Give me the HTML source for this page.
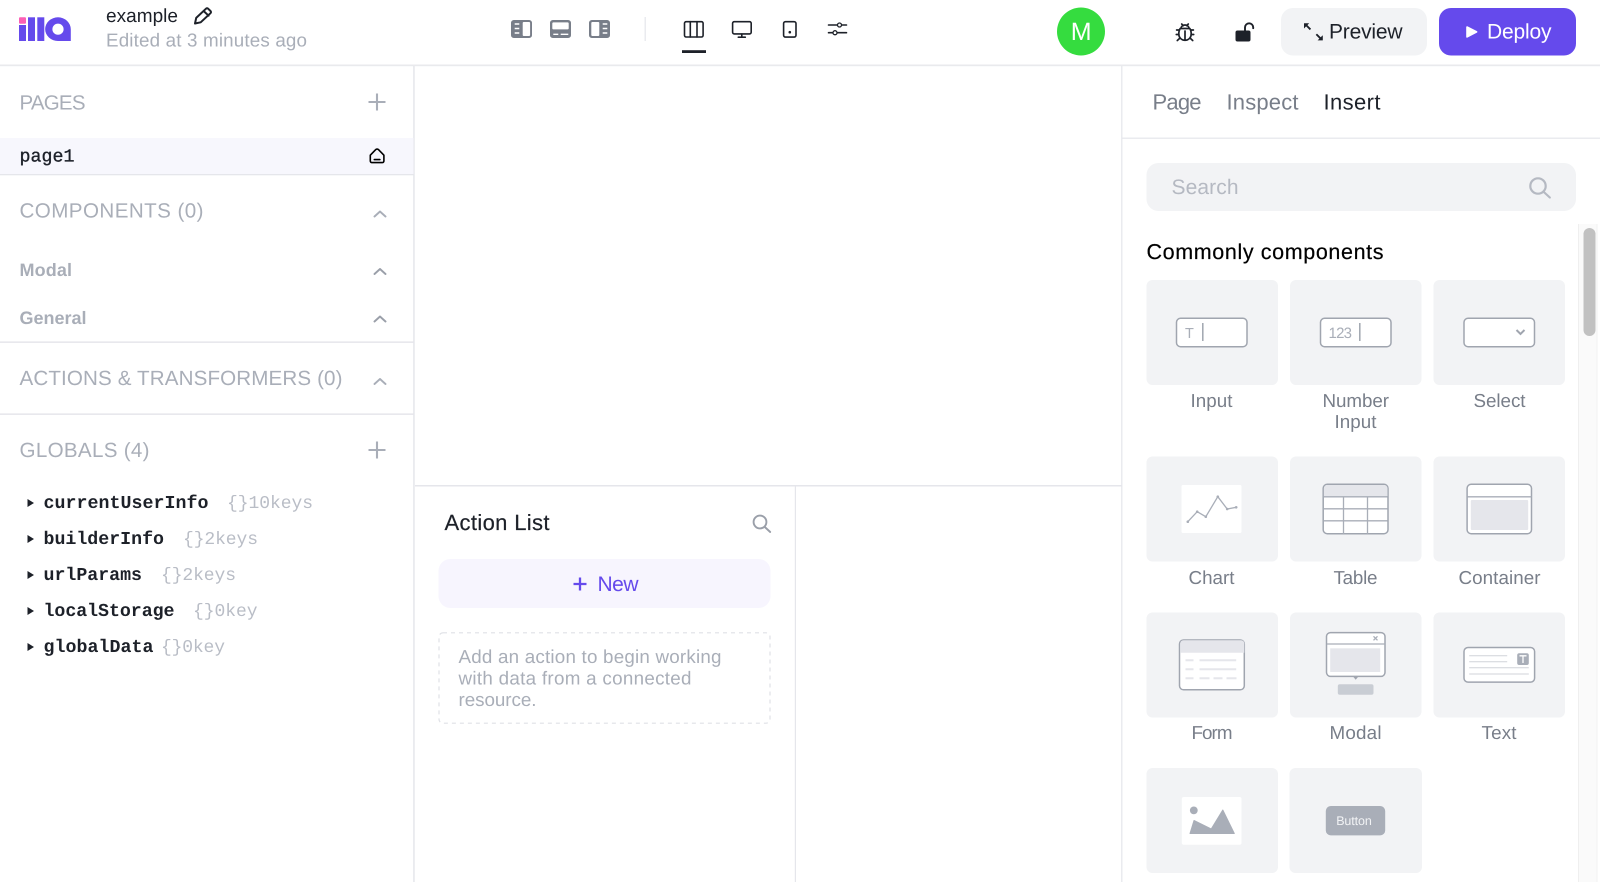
<!DOCTYPE html>
<html lang="en">
<head>
<meta charset="utf-8">
<title>example</title>
<style>
html,body{margin:0;padding:0;background:#fff;width:1600px;height:882px;overflow:hidden}
svg{display:block}
text{font-family:"Liberation Sans",sans-serif;text-rendering:geometricPrecision}
.m{font-family:"Liberation Mono","DejaVu Sans Mono",monospace}
.h{font-size:21px;fill:#a9aeb8}
.s{font-size:18.8px;fill:#a9aeb8}
.b{font-size:18.3px;font-weight:700;fill:#1d2129}
.v{font-size:18px;fill:#b9bdc6}
.l{font-size:18.8px;fill:#787e89}
.card{fill:#f2f3f5}
.o{fill:#fff;stroke:#a0a5af;stroke-width:1.5}
.n{fill:none;stroke:#a9aeb8;stroke-width:1.3}
.d{fill:none;stroke:#1d2129;stroke-width:1.6;stroke-linecap:round;stroke-linejoin:round}
.c{fill:none;stroke:#a9aeb8;stroke-width:1.9;stroke-linecap:round;stroke-linejoin:round}
.f{stroke:#e5e6eb;stroke-width:2;fill:none}
</style>
</head>
<body>
<svg width="1600" height="882" viewBox="0 0 1600 882" xmlns="http://www.w3.org/2000/svg">
<rect width="1600" height="882" fill="#fff"/>

<!-- Structure lines -->
<rect x="0" y="64.5" width="1600" height="1.7" fill="#e9eaed"/>
<rect x="413.2" y="66" width="1.5" height="816" fill="#e5e6eb"/>
<rect x="1121.2" y="66" width="1.2" height="816" fill="#e5e6eb"/>
<rect x="415" y="485" width="707" height="1.5" fill="#e5e6eb"/>
<rect x="794.8" y="486" width="1.2" height="396" fill="#e5e6eb"/>
<rect x="1122" y="137.6" width="478" height="1.2" fill="#e5e6eb"/>

<!-- Logo -->
<rect x="19" y="17.3" width="7" height="6.4" rx="1" fill="#fc5fb5"/>
<rect x="19" y="25" width="7" height="16" fill="#654aec"/>
<rect x="28" y="17.3" width="7" height="23.7" fill="#654aec"/>
<rect x="37.3" y="17.3" width="7" height="23.7" fill="#654aec"/>
<path fill-rule="evenodd" fill="#654aec" d="M58 17.3a12.8 12 0 0 1 12.8 12V41H58a12.8 11.8 0 0 1 0-23.7zM58 23.6a5.6 5.6 0 1 0 0 11.2 5.6 5.6 0 0 0 0-11.2z"/>

<!-- Title -->
<text x="106" y="22" font-size="19" fill="#1d2129" textLength="72" lengthAdjust="spacing">example</text>
<path fill="none" stroke="#1d2129" stroke-width="2" stroke-linejoin="round" stroke-linecap="round" d="M195 23.5l1.2-5.6 9.8-9.2a1.5 1.5 0 0 1 2.1 0l2.4 2.3a1.5 1.5 0 0 1 0 2.2l-9.8 9.1zM203.6 11l5 4.7"/>
<text x="106" y="46.3" class="s" textLength="201" lengthAdjust="spacing">Edited at 3 minutes ago</text>

<!-- Layout toggles -->
<rect x="511" y="20" width="21" height="18" rx="2.8" fill="#787e89"/>
<rect x="522.7" y="22" width="7.4" height="14" rx="1" fill="#fff"/>
<path d="M514.7 24h4.6M514.7 28.5h4.6M514.7 33h4.6" stroke="#fff" stroke-width="1.4"/>
<rect x="550" y="20" width="21" height="18" rx="2.8" fill="#787e89"/>
<rect x="552.3" y="22.4" width="16.4" height="7" rx="1" fill="#fff"/>
<path d="M553.3 34.3h5M560.7 34.3h7.6" stroke="#fff" stroke-width="1.4"/>
<rect x="589" y="20" width="21" height="18" rx="2.8" fill="#787e89"/>
<rect x="591.3" y="22" width="8" height="14" rx="1" fill="#fff"/>
<path d="M602.7 24h4.6M602.7 28.5h4.6M602.7 33h4.6" stroke="#fff" stroke-width="1.4"/>
<rect x="644.6" y="17" width="1.2" height="24" fill="#e5e6eb"/>

<!-- Viewport icons -->
<rect x="684.5" y="21.7" width="18.6" height="15.3" rx="1.6" class="d"/>
<path class="d" stroke-linecap="butt" d="M690.3 21.7V37M697 21.7V37"/>
<rect x="682" y="50.2" width="24" height="2.8" fill="#1d2129"/>
<rect x="732.6" y="21.7" width="18.6" height="12.2" rx="1.6" class="d"/>
<path class="d" d="M741.8 34v3M738.3 37.2h7"/>
<rect x="783.6" y="21.7" width="12.4" height="15.4" rx="1.8" class="d"/>
<circle cx="789.8" cy="32.2" r="1.3" fill="#1d2129"/>
<path class="d" stroke-width="1.3" d="M828.5 25h18M828.5 32.7h18"/>
<circle cx="839.5" cy="25" r="2" fill="#fff" stroke="#1d2129" stroke-width="1.3"/>
<circle cx="835" cy="32.7" r="2" fill="#fff" stroke="#1d2129" stroke-width="1.3"/>

<!-- Avatar -->
<circle cx="1081" cy="31.5" r="24" fill="#35dc3f"/>
<text x="1070.8" y="40" font-size="25" fill="#fff" textLength="21" lengthAdjust="spacing">M</text>

<!-- Bug -->
<path fill="none" stroke="#1d2129" stroke-width="1.7" stroke-linecap="round" stroke-linejoin="round" d="M1180.7 28.5a4.4 4.4 0 0 1 8.6 0zM1180.2 28.5h9.6c1 1.4 1.4 3.4 1.4 5.5 0 3.5-2.6 6.3-6.2 6.3s-6.2-2.8-6.2-6.3c0-2.1.4-4.1 1.4-5.5zM1185 31v9M1181.7 24l1.6 1.6M1188.3 24l-1.6 1.6M1176.6 30h3M1190.4 30h3M1176.3 34.5h2.7M1191 34.5h2.7M1177.3 40.5l2.6-2.4M1192.7 40.5l-2.6-2.4"/>
<!-- Lock -->
<rect x="1235.5" y="30.5" width="15" height="11" rx="2" fill="#1d2129"/>
<path d="M1245 31v-3.6a4.1 4.1 0 0 1 8.2 0v.8" fill="none" stroke="#1d2129" stroke-width="1.9" stroke-linecap="round"/>

<!-- Preview -->
<rect x="1281" y="8" width="146" height="47.5" rx="12" fill="#f2f3f5"/>
<path d="M1304 23.3h5.2l-1.8 1.8 3.7 3.7-1.3 1.3-3.7-3.7-2.1 2.1zM1322.8 40.4h-5.2l1.8-1.8-3.7-3.7 1.3-1.3 3.7 3.7 2.1-2.1z" fill="#1d2129"/>
<text x="1329" y="38.3" font-size="21" fill="#1d2129" textLength="73.5" lengthAdjust="spacing">Preview</text>

<!-- Deploy -->
<rect x="1439" y="8" width="137" height="47.5" rx="12" fill="#654aec"/>
<path d="M1467 27l9.6 4.9-9.6 5z" fill="#fff" stroke="#fff" stroke-width="1.6" stroke-linejoin="round"/>
<text x="1487" y="38.3" font-size="21" fill="#fff" textLength="64.5" lengthAdjust="spacing">Deploy</text>

<!-- Left panel -->
<g transform="translate(-.5 0)">
<text x="20" y="109.3" class="h" font-size="20.5" style="font-size:20.5px" textLength="66" lengthAdjust="spacing">PAGES</text>
<path d="M369 102h17M377.5 93.5v17" stroke="#a9aeb8" stroke-width="2.1" fill="none"/>
<rect x="0" y="138" width="414" height="36" fill="#f7f7fd"/>
<rect x="0" y="174" width="414" height="1.3" fill="#e5e6eb"/>
<text x="20" y="161.3" class="m" font-size="18.3" fill="#1d2129" stroke="#1d2129" stroke-width=".35" textLength="55" lengthAdjust="spacing">page1</text>
<path fill="none" stroke="#000" stroke-width="1.6" stroke-linecap="round" stroke-linejoin="round" d="M370.8 155.2l5.2-5.4a2.2 2.2 0 0 1 3.2 0l5.2 5.4v5.8a1.6 1.6 0 0 1-1.6 1.6h-10.4a1.6 1.6 0 0 1-1.6-1.6zM374.8 159.6h5.6"/>

<text x="20" y="217.3" class="h" style="font-size:20.6px" textLength="184" lengthAdjust="spacing">COMPONENTS (0)</text>
<path class="c" d="M375 216.5l5.5-5 5.5 5"/>
<text x="20" y="276" class="s" style="font-size:18px;font-weight:700" textLength="52.5" lengthAdjust="spacing">Modal</text>
<path class="c" stroke="#9a9fa9" style="stroke:#9a9fa9" d="M375 274l5.5-5 5.5 5"/>
<text x="20" y="324" class="s" style="font-size:18px;font-weight:700" textLength="67" lengthAdjust="spacing">General</text>
<path class="c" style="stroke:#9a9fa9" d="M375 321.5l5.5-5 5.5 5"/>
<rect x="0" y="341.4" width="414" height="1.5" fill="#e5e6eb"/>
<text x="20" y="385" class="h" style="font-size:20.6px" textLength="323" lengthAdjust="spacing">ACTIONS &amp; TRANSFORMERS (0)</text>
<path class="c" d="M375 384l5.5-5 5.5 5"/>
<rect x="0" y="413.4" width="414" height="1.5" fill="#e5e6eb"/>
<text x="20" y="457" class="h" style="font-size:20.6px" textLength="130" lengthAdjust="spacing">GLOBALS (4)</text>
<path d="M369 450h17M377.5 441.5v17" stroke="#a9aeb8" stroke-width="2.1" fill="none"/>

<path d="M28 499l6.5 4-6.5 4zM28 535l6.5 4-6.5 4zM28 571l6.5 4-6.5 4zM28 607l6.5 4-6.5 4zM28 643l6.5 4-6.5 4z" fill="#1d2129"/>
<text x="44" y="508" class="m b" textLength="165" lengthAdjust="spacing">currentUserInfo</text>
<text x="227.5" y="508" class="m v" textLength="86" lengthAdjust="spacing">{}10keys</text>
<text x="44" y="544" class="m b" textLength="120.5" lengthAdjust="spacing">builderInfo</text>
<text x="183.5" y="544" class="m v" textLength="75" lengthAdjust="spacing">{}2keys</text>
<text x="44" y="580" class="m b" textLength="98.5" lengthAdjust="spacing">urlParams</text>
<text x="161.5" y="580" class="m v" textLength="75" lengthAdjust="spacing">{}2keys</text>
<text x="44" y="616" class="m b" textLength="131" lengthAdjust="spacing">localStorage</text>
<text x="193.5" y="616" class="m v" textLength="64.5" lengthAdjust="spacing">{}0key</text>
<text x="44" y="652" class="m b" textLength="110" lengthAdjust="spacing">globalData</text>
<text x="161.5" y="652" class="m v" textLength="64" lengthAdjust="spacing">{}0key</text>
</g>

<!-- Action list -->
<g transform="translate(-.5 0)">
<text x="445" y="530" font-size="22" fill="#1d2129" stroke="#1d2129" stroke-width=".2" textLength="105" lengthAdjust="spacing">Action List</text>
<circle cx="760.5" cy="522" r="6.4" fill="none" stroke="#9a9fa9" stroke-width="1.9"/>
<path d="M765.3 527l5.4 5" stroke="#9a9fa9" stroke-width="1.9" stroke-linecap="round"/>
<rect x="439" y="559" width="332" height="49" rx="12" fill="#f7f5fe"/>
<path d="M574 584h13M580.5 577.5v13" stroke="#654aec" stroke-width="2.3"/>
<text x="598" y="591" font-size="21" fill="#654aec" textLength="41" lengthAdjust="spacing">New</text>
<rect x="439.5" y="632.8" width="331" height="90.4" rx="4" fill="none" stroke="#dfe1e6" stroke-width="1.2" stroke-dasharray="4 4"/>
<text x="459" y="663" class="s" textLength="263" lengthAdjust="spacing">Add an action to begin working</text>
<text x="459" y="684.5" class="s" textLength="233" lengthAdjust="spacing">with data from a connected</text>
<text x="459" y="706" class="s" textLength="78" lengthAdjust="spacing">resource.</text>
</g>

<g transform="translate(-.5 0)">
<!-- Right tabs -->
<text x="1153" y="109.3" font-size="22" fill="#787e89" textLength="49" lengthAdjust="spacing">Page</text>
<text x="1227" y="109.3" font-size="22" fill="#787e89" textLength="72" lengthAdjust="spacing">Inspect</text>
<text x="1324" y="109.3" font-size="22" fill="#1d2129" textLength="57" lengthAdjust="spacing">Insert</text>

<!-- Search -->
<rect x="1147" y="163" width="429.5" height="48" rx="12" fill="#f2f3f5"/>
<text x="1172" y="194" font-size="21" fill="#b5b9c2" textLength="67" lengthAdjust="spacing">Search</text>
<circle cx="1538.5" cy="186" r="7.7" fill="none" stroke="#b5b9c2" stroke-width="2.2"/>
<path d="M1544.3 192l6 5.5" stroke="#b5b9c2" stroke-width="2.2" stroke-linecap="round"/>

<text x="1147" y="259" font-size="21.5" fill="#000" stroke="#000" stroke-width=".2" textLength="237" lengthAdjust="spacing">Commonly components</text>

<!-- Cards -->
<rect class="card" x="1147" y="280" width="131.5" height="105" rx="6"/>
<rect class="card" x="1290.5" y="280" width="131.5" height="105" rx="6"/>
<rect class="card" x="1434" y="280" width="131.5" height="105" rx="6"/>
<rect class="card" x="1147" y="456.5" width="131.5" height="105" rx="6"/>
<rect class="card" x="1290.5" y="456.5" width="131.5" height="105" rx="6"/>
<rect class="card" x="1434" y="456.5" width="131.5" height="105" rx="6"/>
<rect class="card" x="1147" y="612.5" width="131.5" height="105" rx="6"/>
<rect class="card" x="1290.5" y="612.5" width="131.5" height="105" rx="6"/>
<rect class="card" x="1434" y="612.5" width="131.5" height="105" rx="6"/>
<rect class="card" x="1147" y="768" width="131.5" height="105" rx="6"/>
<rect class="card" x="1290" y="768" width="132.5" height="105" rx="6"/>

<!-- Input -->
<rect class="o" x="1177" y="318.3" width="70.5" height="28.4" rx="4"/>
<text x="1185.5" y="338" font-size="14.5" fill="#a9aeb8">T</text>
<path d="M1203.3 323v18" stroke="#a0a5af" stroke-width="1.5"/>
<!-- Number -->
<rect class="o" x="1321" y="318.3" width="70.5" height="28.4" rx="4"/>
<text x="1329" y="338" font-size="15" fill="#a9aeb8" textLength="23.5" lengthAdjust="spacing">123</text>
<path d="M1360.3 323v18" stroke="#a0a5af" stroke-width="1.5"/>
<!-- Select -->
<rect class="o" x="1464.5" y="318.3" width="70.5" height="28.4" rx="4"/>
<path d="M1517 330l4 4 4-4" fill="none" stroke="#a0a5af" stroke-width="2"/>
<!-- Chart -->
<rect x="1182" y="485" width="60" height="48" rx="1.5" fill="#fff"/>
<polyline class="n" points="1188.3,521.7 1197.7,511.7 1206.3,516.7 1218.3,496.7 1227.7,509 1236.7,507.3"/>
<g fill="#a9aeb8"><circle cx="1188.3" cy="521.7" r="1.3"/><circle cx="1197.7" cy="511.7" r="1.3"/><circle cx="1206.3" cy="516.7" r="1.3"/><circle cx="1218.3" cy="496.7" r="1.3"/><circle cx="1227.7" cy="509" r="1.3"/><circle cx="1236.7" cy="507.3" r="1.3"/></g>
<!-- Table -->
<rect class="o" x="1323.7" y="484.3" width="64.8" height="49.4" rx="4"/>
<path d="M1324.4 496.8v-8.5a3.3 3.3 0 0 1 3.3-3.3h57a3.3 3.3 0 0 1 3.3 3.3v8.5z" fill="#e5e6eb"/>
<path class="n" d="M1324 496.8h64M1324 508.8h64M1324 520.8h64M1344 496.8v37M1368 496.8v37"/>
<!-- Container -->
<rect class="o" x="1467.6" y="484.3" width="64.4" height="49.4" rx="4"/>
<path class="n" d="M1468 496.8h64"/>
<rect x="1471.3" y="500" width="57.4" height="30" rx="1" fill="#e5e6eb"/>
<!-- Form -->
<rect class="o" x="1180" y="640" width="64.8" height="49.8" rx="4"/>
<path d="M1180.7 652.8v-9.3a3.3 3.3 0 0 1 3.3-3.3h57.5a3.3 3.3 0 0 1 3.3 3.3v9.3z" fill="#e5e6eb"/>
<path class="f" d="M1186 660.3h8M1200 660.3h36.7M1186 669.3h8M1200 669.3h36.7M1186 678.3h8M1200 678.3h10M1214 678.3h9M1227 678.3h10"/>
<!-- Modal -->
<rect class="o" x="1327" y="632.6" width="58.5" height="43.8" rx="4"/>
<path class="n" d="M1327.5 644h58"/>
<path d="M1374 636.3l4 4M1378 636.3l-4 4" stroke="#a9aeb8" stroke-width="1.3"/>
<rect x="1330.7" y="648.3" width="50" height="23.7" fill="#e5e6eb"/>
<path d="M1353.5 676.5h5.4l-2.7 3.2z" fill="#a0a5af"/>
<rect x="1338.3" y="684.3" width="35.7" height="10.4" rx="2" fill="#c9cdd4"/>
<!-- Text -->
<rect class="o" x="1464.5" y="647.5" width="70.6" height="34.6" rx="4"/>
<path d="M1469.7 655.7h38M1469.7 661.7h38M1469.7 667.8h59.6M1469.7 674h59.6" stroke="#d0d3d9" stroke-width="1"/>
<rect x="1517.7" y="653.3" width="11.6" height="11.7" rx="2" fill="#a9aeb8"/>
<path d="M1520 655.8h7M1523.5 655.8v7.2" stroke="#fff" stroke-width="1.3"/>
<!-- Image -->
<rect x="1182.3" y="797" width="59.7" height="47.7" rx="2" fill="#fff"/>
<circle cx="1194.3" cy="810.4" r="3.9" fill="#a9aeb8"/>
<path d="M1190.5 833.5l4-13 17.2 8.5 11.6-19 11.5 23.5z" fill="#a9aeb8" stroke="#a9aeb8" stroke-width="1" stroke-linejoin="round"/>
<!-- Button -->
<rect x="1326.3" y="806" width="59.4" height="29.4" rx="5" fill="#a9aeb8"/>
<text x="1336.7" y="825" font-size="12.5" fill="#f2f3f5" textLength="35.6" lengthAdjust="spacing">Button</text>

<!-- Labels -->
<text x="1191" y="407" class="l" textLength="42" lengthAdjust="spacing">Input</text>
<text x="1323" y="407" class="l" textLength="66.5" lengthAdjust="spacing">Number</text>
<text x="1335" y="428" class="l" textLength="42" lengthAdjust="spacing">Input</text>
<text x="1474" y="407" class="l" textLength="52" lengthAdjust="spacing">Select</text>
<text x="1189" y="584" class="l" textLength="46" lengthAdjust="spacing">Chart</text>
<text x="1334" y="584" class="l" textLength="44" lengthAdjust="spacing">Table</text>
<text x="1459" y="584" class="l" textLength="82" lengthAdjust="spacing">Container</text>
<text x="1192" y="739" class="l" textLength="41" lengthAdjust="spacing">Form</text>
<text x="1330" y="739" class="l" textLength="52" lengthAdjust="spacing">Modal</text>
<text x="1482" y="739" class="l" textLength="35" lengthAdjust="spacing">Text</text>
</g>

<!-- Scrollbar -->
<rect x="1578" y="224" width="19" height="658" fill="#fafafa"/>
<rect x="1578" y="224" width="1" height="658" fill="#efefef"/>
<rect x="1596.5" y="224" width="1" height="658" fill="#f2f2f2"/>
<rect x="1583.5" y="228" width="12" height="108" rx="6" fill="#c1c1c1"/>
</svg>
</body>
</html>
